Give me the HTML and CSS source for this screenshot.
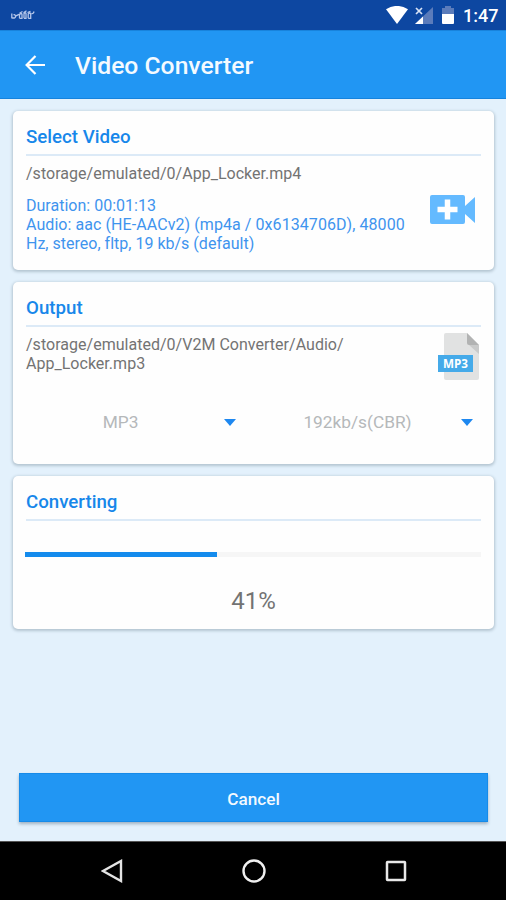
FILE: index.html
```html
<!DOCTYPE html>
<html lang="en">
<head>
<meta charset="utf-8">
<title>Video Converter</title>
<link rel="stylesheet" href="styles.css">
</head>
<body>
<div class="screen">
  <div class="status">
    <svg class="carrier" width="24" height="10" viewBox="0 0 24 10" fill="none" stroke="#b4c6ea" stroke-width="1.3"><path d="M.8 3.500v4.300q4 .8 3.800-1.500Q4 4 2.500 5M5 5.800l3-1.500M8.500 8.300V4.500q2-2 2.500 0v3.800H8.500M13 8.300V3.500q1.500-1.500 2 0v4.800h-2M17.200 8.300V4q2-2 2.500 0v4.300h-2.500M20.500 3.500q2 .5 2.500-2M8.500 3.200l3-1.700M12.500 2.800l3-2M16.500 2.500l3-1.200"/></svg>
    <div class="status-icons">
      <svg width="22" height="18" viewBox="0 0 22 18"><path fill="#fff" d="M0 3.200Q11-3.400 22 3.200L11 18z"/></svg>
      <svg width="18" height="17" viewBox="0 0 18 17"><path fill="#5b7cbb" d="M18 0v17H0z"/><path fill="#fff" d="M8 9.500V17H0z"/><path fill="#0d47a1" d="M0 0h9v8H0z"/><path d="M1 1l6 6M7 1 1 7" stroke="#d9e3f5" stroke-width="1.700"/></svg>
      <svg width="12" height="18" viewBox="0 0 12 18"><path fill="#5b7cbb" d="M3 0h6v2h3v7H0V2h3z"/><path fill="#fff" d="M0 8h12v9q0 1-1 1H1q-1 0-1-1z"/></svg>
      <span class="clock">1:47</span>
    </div>
  </div>
  <header class="toolbar">
    <svg width="20" height="20" viewBox="0 0 20 20" fill="none" stroke="#fff" stroke-width="2.200"><path d="M10.500 1 1.600 10l8.900 9M2 10h18"/></svg>
    <h1>Video Converter</h1>
  </header>
  <main>
    <section class="card select">
      <h2>Select Video</h2>
      <p class="path p1">/storage/emulated/0/App_Locker.mp4</p>
      <div class="row">
        <p class="meta"><span class="tight">Duration: 00:01:13</span><br>Audio: aac (HE-AACv2) (mp4a / 0x6134706D), 48000<br><span class="tight">Hz, stereo, fltp, 19 kb/s (default)</span></p>
        <svg class="cam" width="45" height="30" viewBox="0 0 45 30"><path fill="#64baff" d="M2 0h31q2 0 2 2v9L45 2v26L35 19v8q0 2-2 2H2q-2 0-2-2V2q0-2 2-2z"/><path d="M17.500 4.500v20M7.500 14.500h20" stroke="#fff" stroke-width="5.500"/></svg>
      </div>
    </section>
    <section class="card output">
      <h2>Output</h2>
      <div class="row">
        <p class="path">/storage/emulated/0/V2M Converter/Audio/<br>App_Locker.mp3</p>
        <svg class="file" width="42" height="48" viewBox="0 0 42 48"><path fill="#e1e2e2" d="M8 0h21l12 12v33q0 2-2 2H8q-2 0-2-2V2q0-2 2-2z"/><path fill="#c9caca" d="M31 12h10v9z"/><path fill="#b2b3b3" d="M29 0l12 12H31q-2 0-2-2z"/><path fill="#45aae9" d="M0 22h35v17H0z"/><text x="5" y="35" textLength="25" lengthAdjust="spacingAndGlyphs">MP3</text></svg>
      </div>
      <div class="selects">
        <div class="select-box"><span>MP3</span><svg width="12" height="7" viewBox="0 0 12 7"><path fill="#1e88f0" d="M0 0h12L6 7z"/></svg></div>
        <div class="select-box"><span>192kb/s(CBR)</span><svg width="12" height="7" viewBox="0 0 12 7"><path fill="#1e88f0" d="M0 0h12L6 7z"/></svg></div>
      </div>
    </section>
    <section class="card converting">
      <h2>Converting</h2>
      <div class="track"><div class="bar" style="width:42%"></div></div>
      <p class="percent">41%</p>
    </section>
    <button class="cancel">Cancel</button>
  </main>
  <nav>
    <svg width="22" height="24" viewBox="0 0 22 24" fill="none" stroke="#e4e4e4" stroke-width="2.400"><path d="M20 2v20L2 12z"/></svg>
    <svg width="24" height="24" viewBox="0 0 24 24" fill="none" stroke="#f0f0f0" stroke-width="2.400"><circle cx="12" cy="12" r="10.500"/></svg>
    <svg class="recent" width="22" height="22" viewBox="0 0 22 22" fill="none" stroke="#e8e8e8" stroke-width="2.500"><rect x="2" y="2" width="18" height="18" rx=".5"/></svg>
  </nav>
</div>
</body>
</html>
```
FILE: styles.css
```css
* { box-sizing: border-box; margin: 0; padding: 0; }
body { font-family: Roboto, "Liberation Sans", sans-serif; color: #737373; }
svg { display: block; flex: none; }
.screen { width: 506px; height: 900px; display: flex; flex-direction: column; background: #e3f1fc; overflow: hidden; }
.status { height: 30px; background: #0d47a1; display: flex; justify-content: space-between; align-items: flex-start; padding: 6px 9px 0 11px; }
.carrier { margin-top: 4px; }
.status-icons { display: flex; gap: 9px; }
.status-icons svg:nth-child(2) { margin: 1px 0 0 -2px; }
.clock { color: #fff; font-size: 18px; line-height: 20px; font-weight: 500; width: 34px; white-space: nowrap; }
.toolbar { height: 69px; background: #2196f3; border-top: 1px solid #1883dc; border-bottom: 1px solid #1683dd; display: flex; align-items: center; gap: 30px; padding: 0 26px 0 25px; }
h1 { font-size: 24.7px; font-weight: 500; line-height: 30px; margin-top: 2px; color: #f4faff; }
main { flex: 1; padding: 12px 12px 0 13px; display: flex; flex-direction: column; }
.card { background: #fefefe; border-radius: 5px; padding: 14px 13px 0; box-shadow: 0 1px 3px 1px #b4c5d1; margin-bottom: 12px; width: 481px; }
.select { height: 159px; }
.output { height: 182px; }
.converting { height: 153px; }
h2 { font-size: 18.700px; font-weight: 500; line-height: 25px; height: 31px; color: #1787ea; border-bottom: 2px solid #dceaf7; white-space: nowrap; }
.path, .meta { font-size: 16px; letter-spacing: .02px; line-height: 19px; white-space: nowrap; }
.p1 { margin-top: 8px; }
.row { display: flex; justify-content: space-between; }
.meta { color: #3e94ee; margin-top: 13px; letter-spacing: .07px; }
.tight { letter-spacing: .01px; }
.cam { margin: 12px 6px 0 0; }
.output .path { margin-top: 8px; }
.file { margin: 6px 1px 0 0; }
.file text { font: 700 13px "Open Sans", sans-serif; fill: #fff; }
.selects { display: grid; grid-template-columns: 230px 225px; margin-top: 31px; }
.select-box { display: flex; align-items: center; height: 20px; font-size: 17.300px; color: #b5b8ba; padding-right: 20px; }
.select-box + .select-box { padding-right: 8px; }
.select-box span { flex: 1; text-align: center; padding-right: 9px; }
.select-box + .select-box span { padding-right: 2px; }
.track { height: 5px; background: #f6f6f6; margin: 31px 0 0 -1px; }
.bar { height: 5px; background: #148bed; }
.percent { font-size: 24px; line-height: 30px; margin-top: 29px; text-align: center; }
.cancel { width: 469px; height: 49px; margin: 132px 0 0 6px; padding-top: 2px; border: 1px solid #168be9; background: #2196f3; color: #f2f9ff; font: 500 17.200px Roboto, sans-serif; box-shadow: 0 2px 3px #9fb2c2; }
nav { height: 59px; background: #000; border-top: 1px solid #555; display: flex; justify-content: space-between; padding: 17px 99px 0 101px; }
.recent { margin-top: 1px; }
```
